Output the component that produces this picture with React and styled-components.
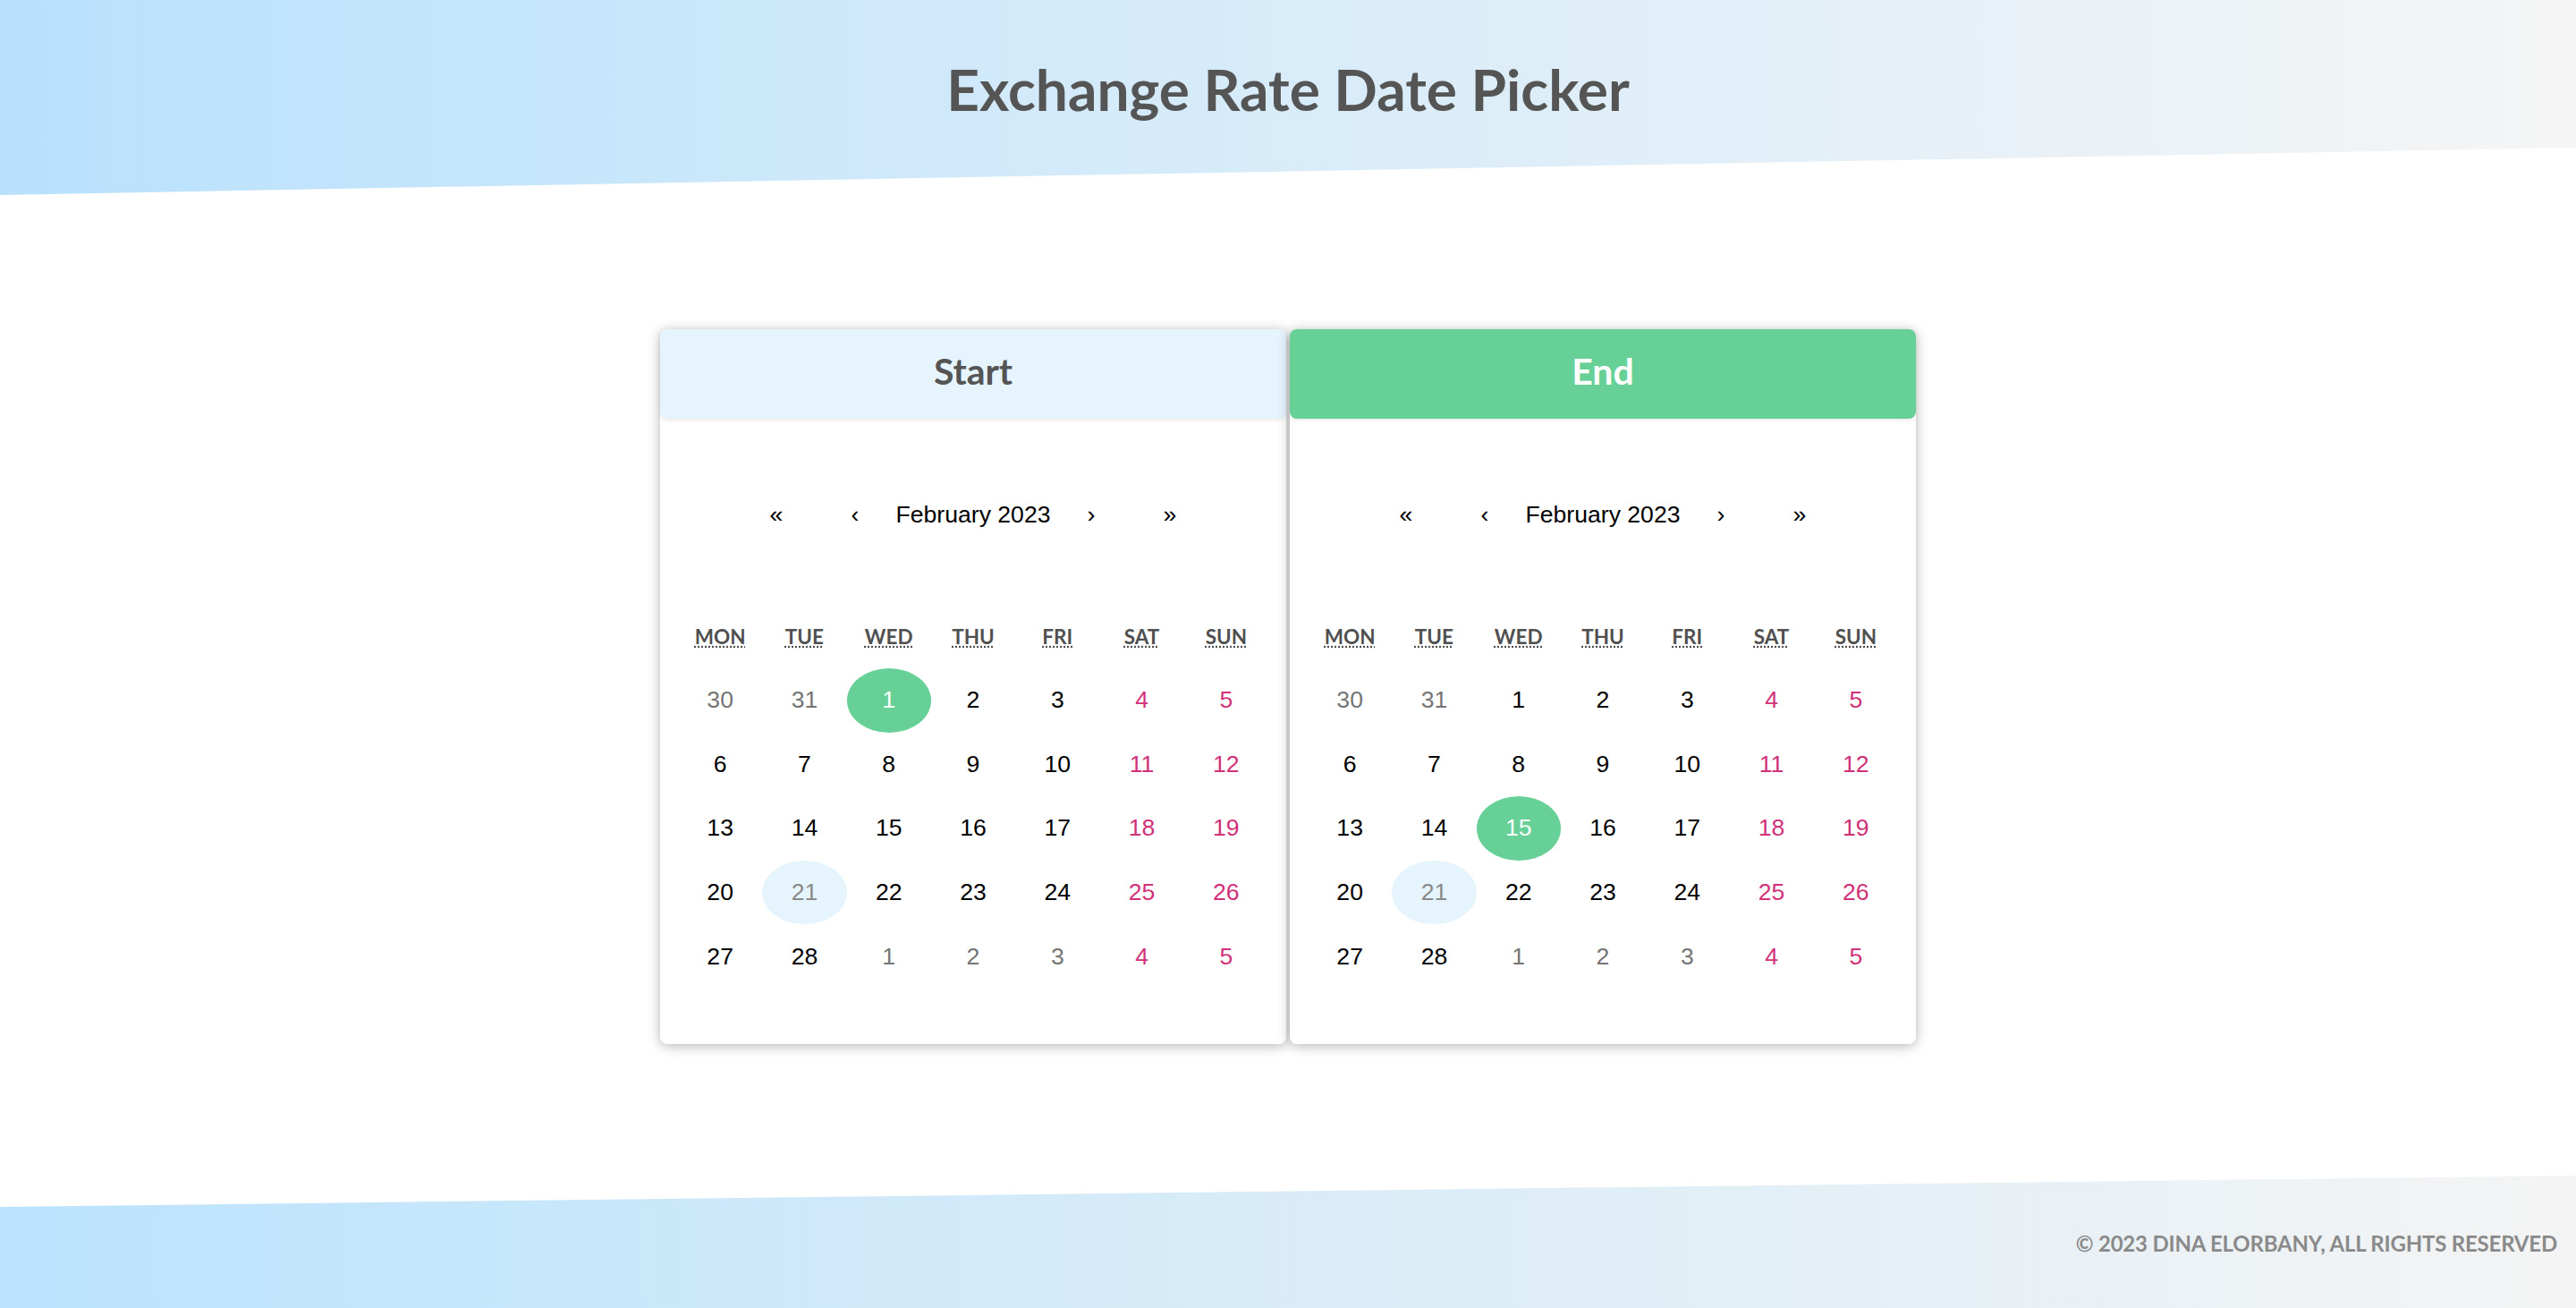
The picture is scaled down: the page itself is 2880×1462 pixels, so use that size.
import React from "react";
import styled, { createGlobalStyle } from "styled-components";

const Global = createGlobalStyle`
  html, body { margin: 0; padding: 0; background: #fff; }
  #root { min-height: 100vh; display: flex; flex-direction: column; }
  * { box-sizing: border-box; }
`;

const Page = styled.div`
  min-height: 100vh;
  display: flex;
  flex-direction: column;
  font-family: Lato, "Liberation Sans", sans-serif;
`;

const Header = styled.header`
  height: 218px;
  padding-top: 61px;
  background: linear-gradient(90deg, #b9e1fc 0%, #d2eafa 40%, #f5f5f5 100%);
  clip-path: polygon(0 0, 100% 0, 100% 165px, 0 218px);
  text-align: center;
`;

const Title = styled.h1`
  margin: 0;
  font-family: Lato, sans-serif;
  font-weight: 700;
  font-size: 64px;
  line-height: 77px;
  color: #555;
`;

const Main = styled.main`
  padding-top: 150px;
  display: flex;
  justify-content: center;
  gap: 4px;
`;

const Card = styled.section`
  width: 700px;
  background: #fff;
  border-radius: 8px;
  box-shadow: 0 2px 14px rgba(0, 0, 0, 0.3);
  display: flex;
  flex-direction: column;
`;

const CardHead = styled.div`
  height: 100px;
  padding-bottom: 8px;
  border-radius: 8px;
  display: flex;
  align-items: center;
  justify-content: center;
  background: ${(p) => (p.$active ? "#66d096" : "#e6f4fe")};
  color: ${(p) => (p.$active ? "#fff" : "#555")};
  box-shadow: 0 2px 4px rgba(0, 0, 0, 0.08);
  font-family: Lato, sans-serif;
  font-weight: 700;
  font-size: 41px;
`;

const Calendar = styled.div`
  padding: 85px 20px 62px;
`;

const Nav = styled.div`
  height: 44px;
  display: flex;
  justify-content: center;
  align-items: center;
  margin-bottom: 92px;
  font-family: "Liberation Sans", Arial, sans-serif;
  font-size: 26.6px;
  color: #000;
`;

const NavButton = styled.button`
  width: 88px;
  height: 44px;
  border: 0;
  background: none;
  padding: 0;
  font: inherit;
  color: inherit;
  cursor: pointer;
`;

const NavLabel = styled.span`
  width: 176px;
  text-align: center;
`;

const Weekdays = styled.div`
  display: grid;
  grid-template-columns: repeat(7, 1fr);
  height: 44px;
  align-items: center;
  margin-bottom: 14px;
`;

const Weekday = styled.abbr`
  text-align: center;
  font-family: Lato, sans-serif;
  font-weight: 700;
  font-size: 22.5px;
  color: #505050;
  text-decoration: underline dotted;
  text-underline-offset: 3px;
  justify-self: center;
`;

const Days = styled.div`
  display: grid;
  grid-template-columns: repeat(7, 1fr);
  grid-auto-rows: 71.6px;
`;

const Tile = styled.button`
  border: 0;
  padding: 0;
  margin: 0;
  border-radius: 50%;
  font-family: "Liberation Sans", Arial, sans-serif;
  font-size: 26.6px;
  cursor: pointer;
  background: ${(p) =>
    p.$selected ? "#66d096" : p.$today ? "#e6f4fe" : "transparent"};
  color: ${(p) =>
    p.$selected
      ? "#fff"
      : p.$today
      ? "#8a8a8a"
      : p.$weekend
      ? "#d03178"
      : p.$other
      ? "#757575"
      : "#000"};
`;

const Footer = styled.footer`
  margin-top: auto;
  height: 148px;
  background: linear-gradient(90deg, #bbe3fd 0%, #d6ebf8 45%, #f4f4f4 100%);
  clip-path: polygon(0 35px, 100% 0, 100% 100%, 0 100%);
  display: flex;
  align-items: center;
  justify-content: flex-end;
  padding: 0 21px 0 0;
`;

const Copy = styled.p`
  margin: 0;
  padding-top: 2px;
  font-family: Lato, sans-serif;
  font-weight: 700;
  font-size: 24px;
  letter-spacing: -0.2px;
  color: #8a8a8a;
  text-transform: uppercase;
`;

const WEEKDAYS = [
  ["MON", "Monday"],
  ["TUE", "Tuesday"],
  ["WED", "Wednesday"],
  ["THU", "Thursday"],
  ["FRI", "Friday"],
  ["SAT", "Saturday"],
  ["SUN", "Sunday"],
];

const buildDays = () => {
  const days = [];
  [30, 31].forEach((d) => days.push({ d, other: true }));
  for (let d = 1; d <= 28; d++) days.push({ d, other: false });
  [1, 2, 3, 4, 5].forEach((d) => days.push({ d, other: true }));
  return days.map((x, i) => ({ ...x, weekend: i % 7 >= 5 }));
};

const DAYS = buildDays();

function DatePicker({ title, active, selected }) {
  return (
    <Card>
      <CardHead $active={active}>{title}</CardHead>
      <Calendar>
        <Nav>
          <NavButton>«</NavButton>
          <NavButton>‹</NavButton>
          <NavLabel>February 2023</NavLabel>
          <NavButton>›</NavButton>
          <NavButton>»</NavButton>
        </Nav>
        <Weekdays>
          {WEEKDAYS.map(([s, l]) => (
            <Weekday key={s} title={l}>
              {s}
            </Weekday>
          ))}
        </Weekdays>
        <Days>
          {DAYS.map((x, i) => (
            <Tile
              key={i}
              $other={x.other}
              $weekend={x.weekend}
              $selected={!x.other && x.d === selected}
              $today={!x.other && x.d === 21}
            >
              {x.d}
            </Tile>
          ))}
        </Days>
      </Calendar>
    </Card>
  );
}

export default function App() {
  return (
    <Page>
      <Global />
      <Header>
        <Title>Exchange Rate Date Picker</Title>
      </Header>
      <Main>
        <DatePicker title="Start" selected={1} />
        <DatePicker title="End" active selected={15} />
      </Main>
      <Footer>
        <Copy>© 2023 Dina Elorbany, All rights reserved</Copy>
      </Footer>
    </Page>
  );
}
